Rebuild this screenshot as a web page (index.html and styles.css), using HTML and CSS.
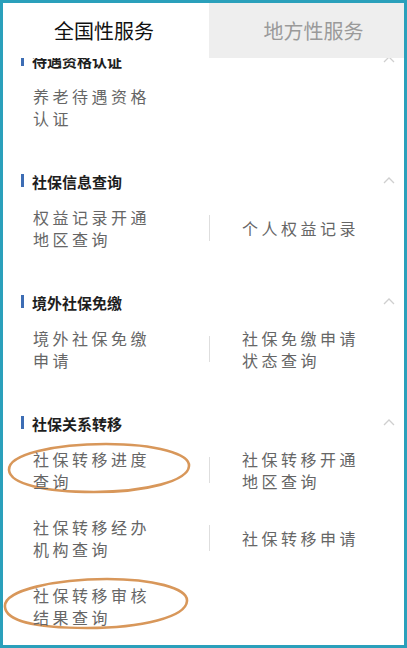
FILE: index.html
```html
<!DOCTYPE html>
<html lang="zh">
<head>
<meta charset="utf-8">
<link rel="stylesheet" href="styles.css">
</head>
<body>
<div class="frame">
  <div class="tabs">
    <div class="tab tab-active">全国性服务</div>
    <div class="tab tab-idle">地方性服务</div>
  </div>
  <div class="content">
    <div class="list">
      <section class="group">
        <div class="group-head"><span class="bar"></span><span class="title">待遇资格认证</span><svg class="chev" viewBox="0 0 12 8"><path d="M1 7 L6 2 L11 7"/></svg></div>
        <div class="row">
          <div class="cell left"><span class="txt">养老待遇资格认证</span></div>
        </div>
      </section>
      <section class="group">
        <div class="group-head"><span class="bar"></span><span class="title">社保信息查询</span><svg class="chev" viewBox="0 0 12 8"><path d="M1 7 L6 2 L11 7"/></svg></div>
        <div class="row">
          <div class="cell left"><span class="txt">权益记录开通地区查询</span></div>
          <div class="divider"></div>
          <div class="cell right"><span class="txt">个人权益记录</span></div>
        </div>
      </section>
      <section class="group">
        <div class="group-head"><span class="bar"></span><span class="title">境外社保免缴</span><svg class="chev" viewBox="0 0 12 8"><path d="M1 7 L6 2 L11 7"/></svg></div>
        <div class="row">
          <div class="cell left"><span class="txt">境外社保免缴申请</span></div>
          <div class="divider"></div>
          <div class="cell right"><span class="txt">社保免缴申请状态查询</span></div>
        </div>
      </section>
      <section class="group">
        <div class="group-head"><span class="bar"></span><span class="title">社保关系转移</span><svg class="chev" viewBox="0 0 12 8"><path d="M1 7 L6 2 L11 7"/></svg></div>
        <div class="row">
          <div class="cell left">
            <svg class="ring ring-a" viewBox="0 0 186 54" preserveAspectRatio="none"><path d="M3 29 C 2 13, 50 3, 100 3 C 150 3, 184 13, 183 25 C 182 40, 140 51, 88 51 C 38 51, 4 43, 3 29 Z"/></svg>
            <span class="txt">社保转移进度查询</span>
          </div>
          <div class="divider"></div>
          <div class="cell right"><span class="txt">社保转移开通地区查询</span></div>
        </div>
        <div class="row">
          <div class="cell left"><span class="txt">社保转移经办机构查询</span></div>
          <div class="divider"></div>
          <div class="cell right"><span class="txt">社保转移申请</span></div>
        </div>
        <div class="row">
          <div class="cell left">
            <svg class="ring ring-b" viewBox="0 0 188 55" preserveAspectRatio="none"><path d="M3 31 C 1 14, 55 3, 105 3 C 150 3, 186 12, 185 25 C 184 41, 140 52, 85 52 C 35 52, 4 45, 3 31 Z"/></svg>
            <span class="txt">社保转移审核结果查询</span>
          </div>
        </div>
      </section>
    </div>
  </div>
</div>
</body>
</html>
```
FILE: styles.css
```css
html, body {
  margin: 0;
  padding: 0;
  background: #ffffff;
}

body {
  font-family: "Noto Sans CJK SC", "Noto Sans", sans-serif;
}

.frame {
  width: 407px;
  height: 648px;
  box-sizing: border-box;
  border: 3px solid #2aa0bb;
  display: flex;
  flex-direction: column;
  background: #fff;
  overflow: hidden;
}

.tabs {
  display: flex;
  height: 55px;
  flex: none;
}

.tab {
  display: flex;
  align-items: center;
  justify-content: center;
  font-size: 20px;
  line-height: 1;
}

.tab-active {
  width: 206px;
  background: #ffffff;
  color: #111111;
  padding-right: 4px;
  box-sizing: border-box;
}

.tab-idle {
  flex: 1;
  background: #eeeeee;
  color: #9a9a9a;
  padding-left: 14px;
}

.content {
  flex: 1;
  overflow: hidden;
}

.list {
  margin-top: -9px;
}

.group {
  margin-bottom: 29px;
}

.group-head {
  display: flex;
  align-items: center;
  height: 24px;
  padding-left: 18px;
  padding-right: 9px;
}

.bar {
  width: 3px;
  height: 13px;
  background: #3d6db4;
  margin-right: 8px;
  margin-top: -3px;
}

.title {
  font-size: 15px;
  font-weight: 700;
  color: #1e1e1e;
  line-height: 24px;
}

.chev {
  margin-left: auto;
  width: 12px;
  height: 8px;
  margin-top: -4px;
  fill: none;
  stroke: #cfcfcf;
  stroke-width: 1.3;
}

.row {
  display: grid;
  grid-template-columns: 206px 1px 1fr;
  align-items: center;
  padding: 12px 0;
}

.cell {
  position: relative;
}

.left {
  padding-left: 30px;
}

.right {
  padding-left: 32px;
}

.divider {
  width: 1px;
  height: 26px;
  background: #dedede;
}

.txt {
  display: block;
  width: 124px;
  font-size: 16px;
  line-height: 22px;
  letter-spacing: 3.5px;
  color: #666666;
  position: relative;
}

.ring {
  position: absolute;
  fill: none;
  stroke: #d8975a;
  stroke-width: 2.6;
}

.ring-a {
  left: 3px;
  top: -7px;
  width: 186px;
  height: 54px;
}

.ring-b {
  left: -1px;
  top: -8px;
  width: 188px;
  height: 55px;
}
```
